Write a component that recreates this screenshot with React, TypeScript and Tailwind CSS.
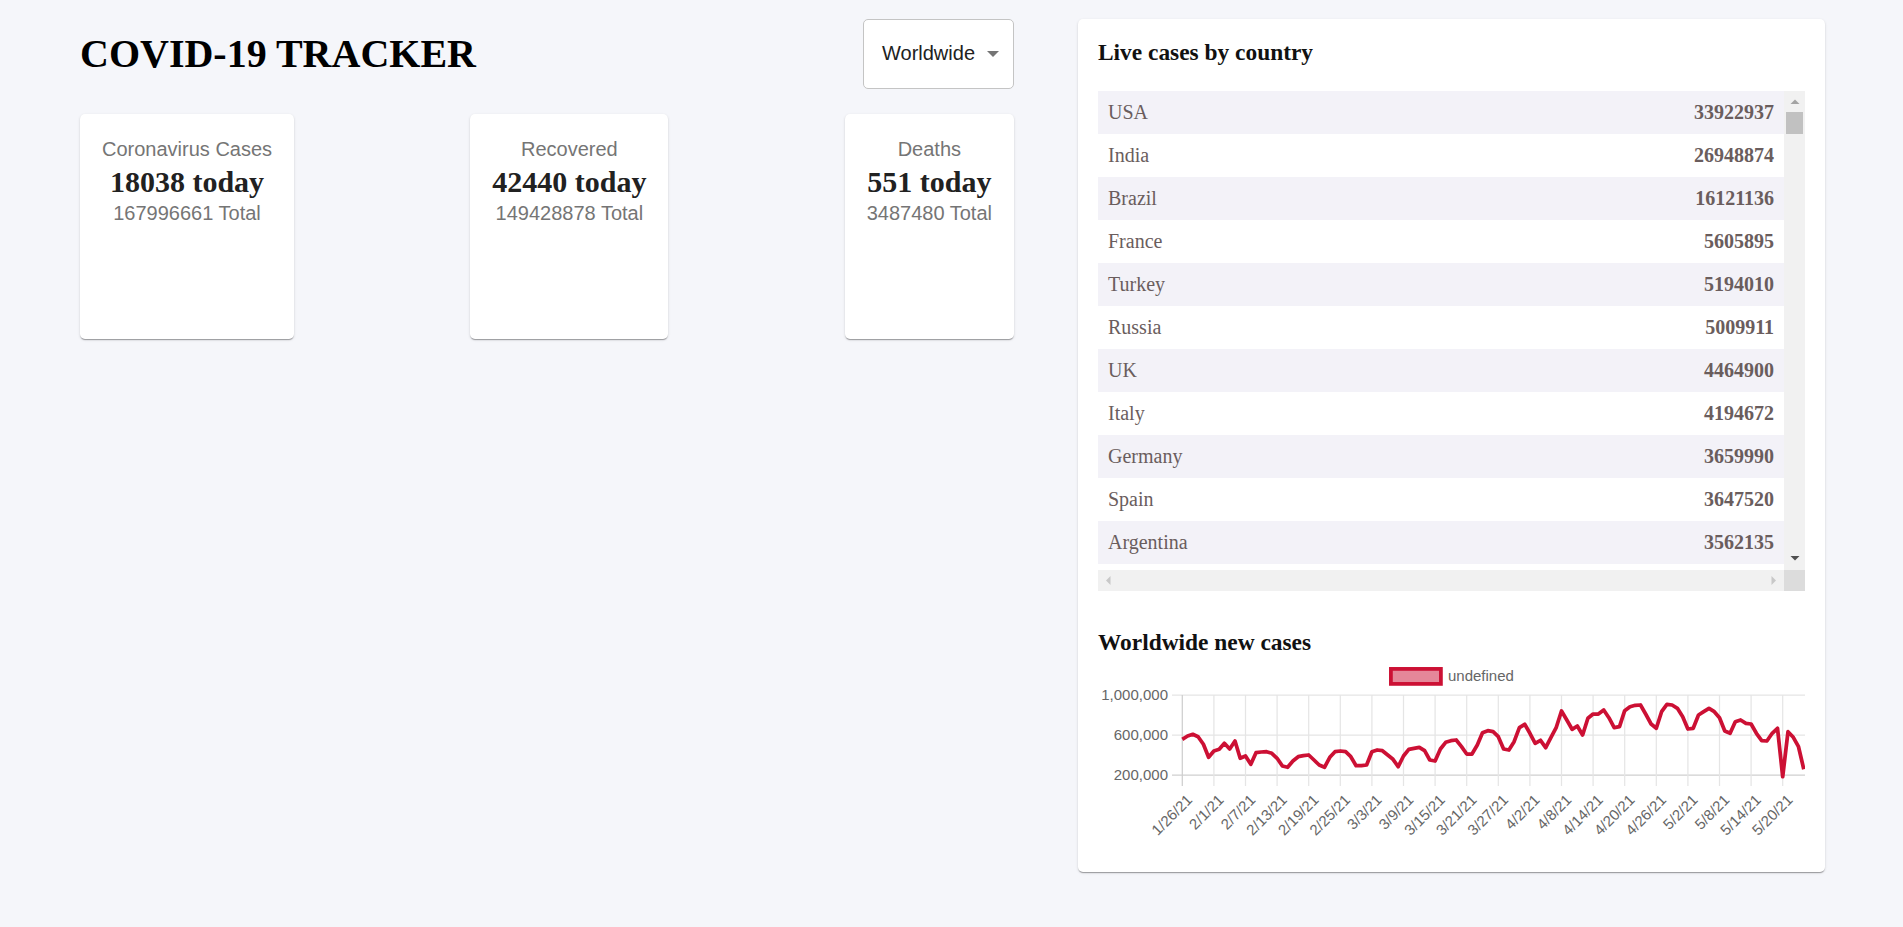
import React from "react";

const serif = "font-['Liberation_Serif',serif]";
const sans = "font-['Liberation_Sans',Arial,sans-serif]";

const cardShadow =
  "shadow-[0_2px_1px_-1px_rgba(0,0,0,0.2),0_1px_1px_0_rgba(0,0,0,0.14),0_1px_3px_0_rgba(0,0,0,0.12)]";

const countries: [string, number][] = [
  ["USA", 33922937],
  ["India", 26948874],
  ["Brazil", 16121136],
  ["France", 5605895],
  ["Turkey", 5194010],
  ["Russia", 5009911],
  ["UK", 4464900],
  ["Italy", 4194672],
  ["Germany", 3659990],
  ["Spain", 3647520],
  ["Argentina", 3562135],
];

// new cases per day, in thousands (1/26/21 .. 5/24/21)
const cases = [
  557, 590, 607, 583, 507, 377, 440, 457, 517, 460, 540, 367, 390, 307, 423, 430, 433, 417, 367, 290,
  277, 340, 383, 393, 400, 350, 300, 277, 377, 433, 440, 433, 383, 293, 293, 300, 433, 450, 443, 400,
  357, 283, 390, 457, 467, 477, 443, 350, 340, 460, 527, 543, 550, 483, 410, 410, 500, 623, 643, 633,
  583, 460, 450, 533, 673, 707, 617, 517, 547, 473, 577, 677, 840, 750, 657, 690, 600, 767, 810, 810,
  850, 773, 673, 683, 843, 883, 897, 900, 807, 710, 667, 833, 907, 900, 867, 783, 660, 667, 800, 833,
  867, 833, 773, 640, 617, 733, 750, 717, 710, 617, 543, 540, 617, 667, 183, 633, 577, 483, 257,
];

const dateLabels = [
  "1/26/21", "2/1/21", "2/7/21", "2/13/21", "2/19/21", "2/25/21", "3/3/21", "3/9/21", "3/15/21", "3/21/21",
  "3/27/21", "4/2/21", "4/8/21", "4/14/21", "4/20/21", "4/26/21", "5/2/21", "5/8/21", "5/14/21", "5/20/21",
];

function InfoBox({ title, cases, total }: { title: string; cases: number; total: number }) {
  return (
    <div className={`h-[225px] rounded-[5px] bg-white px-[22px] pt-5 text-center ${cardShadow}`}>
      <div className={`${sans} text-[20px] leading-[30px] text-[#757575]`}>{title}</div>
      <h2 className={`${serif} text-[30px] font-bold leading-[36px] text-[#212121]`}>{cases} today</h2>
      <div className={`${sans} text-[20px] leading-[26px] text-[#757575]`}>{total} Total</div>
    </div>
  );
}

function CountryTable() {
  return (
    <div className="flex flex-col">
      <div className="flex">
        <div className="h-[479px] w-[687px] overflow-hidden bg-white">
          <table className={`${serif} w-full text-[20px] text-[#6a5d5d]`}>
            <tbody>
              {countries.map(([name, n], i) => (
                <tr key={name} className={i % 2 === 0 ? "bg-[#f3f2f8]" : "bg-white"}>
                  <td className="h-[43px] px-[10px] leading-[23px]">{name}</td>
                  <td className="h-[43px] px-[10px] text-right font-bold leading-[23px]">{n}</td>
                </tr>
              ))}
            </tbody>
          </table>
        </div>
        {/* vertical scrollbar */}
        <div className="flex w-[21px] flex-col items-center bg-[#f1f1f1]">
          <svg width="10" height="21" viewBox="0 0 10 21" className="shrink-0">
            <path d="M0.5 13 L5 8.5 L9.5 13 Z" fill="#a3a3a3" />
          </svg>
          <div className="h-[22px] w-[17px] bg-[#c1c1c1]" />
          <div className="flex-1" />
          <svg width="10" height="21" viewBox="0 0 10 21" className="shrink-0">
            <path d="M0.5 7 L5 11.5 L9.5 7 Z" fill="#505050" />
          </svg>
        </div>
      </div>
      {/* horizontal scrollbar */}
      <div className="flex h-[21px]">
        <div className="flex flex-1 items-center justify-between bg-[#f1f1f1] px-[8px]">
          <svg width="5" height="9" viewBox="0 0 5 9">
            <path d="M4.5 0 L0 4.5 L4.5 9 Z" fill="#c8c8c8" />
          </svg>
          <svg width="5" height="9" viewBox="0 0 5 9">
            <path d="M0.5 0 L5 4.5 L0.5 9 Z" fill="#c8c8c8" />
          </svg>
        </div>
        <div className="w-[21px] bg-[#dcdcdc]" />
      </div>
    </div>
  );
}

function LineGraph() {
  const x0 = 84.3;
  const dayW = 5.267;
  const yOf = (v: number) => 115 - (v - 200) / 10;
  const points = cases.map((v, i) => `${(x0 + dayW * i).toFixed(1)},${yOf(v).toFixed(1)}`).join(" ");
  const yTicks: [string, number][] = [
    ["1,000,000", 35],
    ["600,000", 75],
    ["200,000", 115],
  ];

  return (
    <svg width="707" height="192" viewBox="0 0 707 192" className="mt-[4px] block">
      {/* legend */}
      <rect x="292.9" y="8.9" width="50" height="15" fill="rgba(204,16,52,0.5)" stroke="#cc1034" strokeWidth="3.75" />
      <text x="350" y="20.5" fontSize="15" fill="#666" fontFamily="Liberation Sans, Arial, sans-serif">
        undefined
      </text>

      {/* horizontal grid */}
      {yTicks.map(([label, y], i) => (
        <g key={label}>
          <line x1="74" x2="707" y1={y} y2={y} stroke={i === 2 ? "#cfcfcf" : "#e5e5e5"} strokeWidth="1.25" />
          <text x="70" y={y + 5} textAnchor="end" fontSize="15" fill="#666" fontFamily="Liberation Sans, Arial, sans-serif">
            {label}
          </text>
        </g>
      ))}

      {/* vertical grid + x labels */}
      {dateLabels.map((d, k) => {
        const gx = x0 + 31.6 * k;
        const ax = gx + 7;
        const ay = 137;
        return (
          <g key={d}>
            <line x1={gx} x2={gx} y1="35" y2="126" stroke={k === 0 ? "#cfcfcf" : "#e5e5e5"} strokeWidth="1.25" />
            <text
              x={ax}
              y={ay}
              textAnchor="end"
              dominantBaseline="central"
              transform={`rotate(-45 ${ax} ${ay})`}
              fontSize="15"
              fill="#666"
              fontFamily="Liberation Sans, Arial, sans-serif"
            >
              {d}
            </text>
          </g>
        );
      })}

      <polyline points={points} fill="none" stroke="#cc1034" strokeWidth="3.75" strokeLinejoin="round" />
    </svg>
  );
}

export default function App() {
  return (
    <div className="min-h-screen bg-[#f5f6fa]">
      <div className="flex items-start gap-[64px] pb-10 pl-[80px] pr-[78px] pt-[19px]">
        {/* left */}
        <div className="w-[934px]">
          <div className="flex h-[70px] items-center justify-between">
            <h1 className={`${serif} text-[40px] font-bold leading-[46px] text-black`}>COVID-19 TRACKER</h1>
            <div className="flex h-[70px] w-[151px] items-center gap-[12px] rounded-[5px] border border-[#c4c4c4] bg-white pb-[3px] pl-[18px]">
              <span className={`${sans} text-[20px] leading-[30px] text-[#212121]`}>Worldwide</span>
              <svg width="12" height="6" viewBox="0 0 12 6" className="mt-[3px]">
                <path d="M0 0 L6 6 L12 0 Z" fill="#757575" />
              </svg>
            </div>
          </div>
          <div className="mt-[25px] flex justify-between">
            <InfoBox title="Coronavirus Cases" cases={18038} total={167996661} />
            <InfoBox title="Recovered" cases={42440} total={149428878} />
            <InfoBox title="Deaths" cases={551} total={3487480} />
          </div>
        </div>

        {/* right */}
        <div className={`w-[747px] rounded-[5px] bg-white p-5 ${cardShadow}`}>
          <h3 className={`${serif} text-[23.4px] font-bold leading-[27px] text-[#111]`}>Live cases by country</h3>
          <div className="mt-[25px]">
            <CountryTable />
          </div>
          <h3 className={`${serif} mt-[38px] text-[23.4px] font-bold leading-[27px] text-[#111]`}>Worldwide new cases</h3>
          <LineGraph />
        </div>
      </div>
    </div>
  );
}
